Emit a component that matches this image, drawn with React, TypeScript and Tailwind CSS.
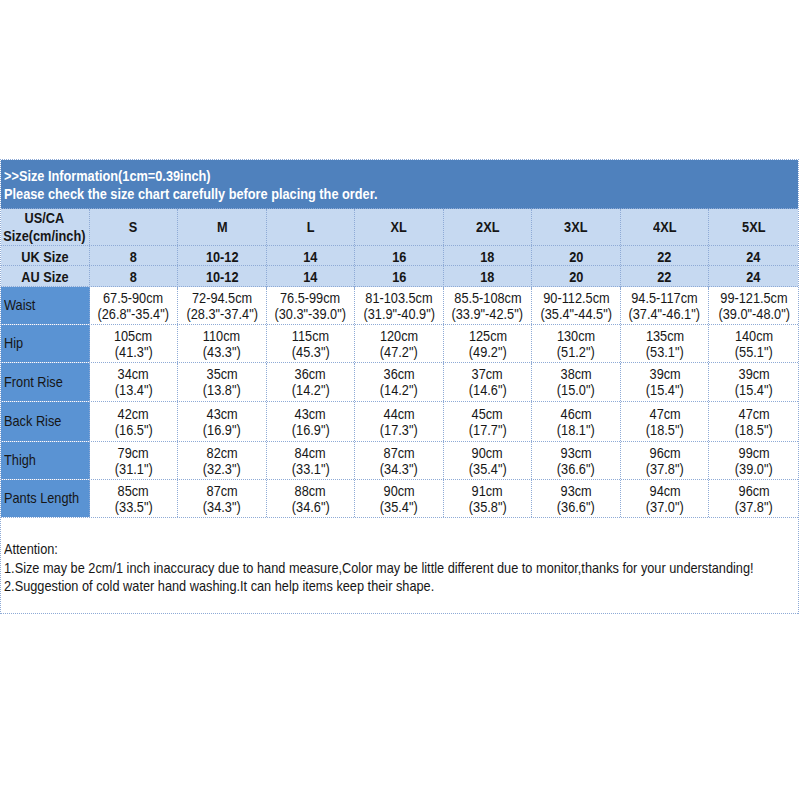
const sizes = ["S", "M", "L", "XL", "2XL", "3XL", "4XL", "5XL"];
const uk = ["8", "10-12", "14", "16", "18", "20", "22", "24"];
const au = ["8", "10-12", "14", "16", "18", "20", "22", "24"];

const rows: { label: string; h: string; cells: [string, string][] }[] = [
  {
    label: "Waist",
    h: "h-[38px]",
    cells: [
      ["67.5-90cm", '(26.8"-35.4")'],
      ["72-94.5cm", '(28.3"-37.4")'],
      ["76.5-99cm", '(30.3"-39.0")'],
      ["81-103.5cm", '(31.9"-40.9")'],
      ["85.5-108cm", '(33.9"-42.5")'],
      ["90-112.5cm", '(35.4"-44.5")'],
      ["94.5-117cm", '(37.4"-46.1")'],
      ["99-121.5cm", '(39.0"-48.0")'],
    ],
  },
  {
    label: "Hip",
    h: "h-[38px]",
    cells: [
      ["105cm", '(41.3")'],
      ["110cm", '(43.3")'],
      ["115cm", '(45.3")'],
      ["120cm", '(47.2")'],
      ["125cm", '(49.2")'],
      ["130cm", '(51.2")'],
      ["135cm", '(53.1")'],
      ["140cm", '(55.1")'],
    ],
  },
  {
    label: "Front Rise",
    h: "h-[39px]",
    cells: [
      ["34cm", '(13.4")'],
      ["35cm", '(13.8")'],
      ["36cm", '(14.2")'],
      ["36cm", '(14.2")'],
      ["37cm", '(14.6")'],
      ["38cm", '(15.0")'],
      ["39cm", '(15.4")'],
      ["39cm", '(15.4")'],
    ],
  },
  {
    label: "Back Rise",
    h: "h-[40px]",
    cells: [
      ["42cm", '(16.5")'],
      ["43cm", '(16.9")'],
      ["43cm", '(16.9")'],
      ["44cm", '(17.3")'],
      ["45cm", '(17.7")'],
      ["46cm", '(18.1")'],
      ["47cm", '(18.5")'],
      ["47cm", '(18.5")'],
    ],
  },
  {
    label: "Thigh",
    h: "h-[38px]",
    cells: [
      ["79cm", '(31.1")'],
      ["82cm", '(32.3")'],
      ["84cm", '(33.1")'],
      ["87cm", '(34.3")'],
      ["90cm", '(35.4")'],
      ["93cm", '(36.6")'],
      ["96cm", '(37.8")'],
      ["99cm", '(39.0")'],
    ],
  },
  {
    label: "Pants Length",
    h: "h-[38px]",
    cells: [
      ["85cm", '(33.5")'],
      ["87cm", '(34.3")'],
      ["88cm", '(34.6")'],
      ["90cm", '(35.4")'],
      ["91cm", '(35.8")'],
      ["93cm", '(36.6")'],
      ["94cm", '(37.0")'],
      ["96cm", '(37.8")'],
    ],
  },
];

// the picture's type is narrow, like Arial Narrow; squeeze Liberation Sans to match
const Narrow = ({ children, left, wide }: { children: React.ReactNode; left?: boolean; wide?: boolean }) => (
  <span
    className={`inline-block whitespace-nowrap ${wide ? "scale-x-[0.91]" : "scale-x-[0.85]"} ${
      left ? "origin-left" : "origin-center"
    }`}
  >
    {children}
  </span>
);

const SizeRow = ({ label, values, h }: { label: React.ReactNode; values: string[]; h: string }) => (
  <div className={`grid grid-cols-9 ${h} bg-[#c6d9f1] border-b border-dotted border-[#8eaad6]`}>
    <div className="flex flex-col items-center justify-center leading-[18px] border-r border-dotted border-[#8eaad6]">
      {label}
    </div>
    {values.map((v, i) => (
      <div
        key={i}
        className="flex items-center justify-center border-r border-dotted border-[#8eaad6] last:border-r-0"
      >
        <Narrow>{v}</Narrow>
      </div>
    ))}
  </div>
);

export default function App() {
  return (
    <div className="w-[800px] h-[800px] overflow-hidden bg-white font-['Liberation_Sans',Arial,sans-serif] text-[#161616]">
      <div className="h-[159px]" />
      <div className="w-[799px] overflow-hidden border-t border-r border-l border-dotted border-[#8eaad6]">
        <div className="h-[49px] bg-[#4f81bd] text-white font-bold text-[15px] leading-[18px] px-[3px] pt-[7px] border-b border-dotted border-[#8eaad6]">
          <p>
            <Narrow left>&gt;&gt;Size Information(1cm=0.39inch)</Narrow>
          </p>
          <p>
            <Narrow left>Please check the size chart carefully before placing the order.</Narrow>
          </p>
        </div>

        <div className="font-bold text-[15px]">
          <SizeRow
            h="h-[37px]"
            label={
              <>
                <Narrow>US/CA</Narrow>
                <Narrow>Size(cm/inch)</Narrow>
              </>
            }
            values={sizes}
          />
          <SizeRow h="h-[20px]" label={<Narrow>UK Size</Narrow>} values={uk} />
          <SizeRow h="h-[21px]" label={<Narrow>AU Size</Narrow>} values={au} />
        </div>

        <div className="text-[15px]">
          {rows.map((r) => (
            <div key={r.label} className={`grid grid-cols-9 ${r.h} border-b border-dotted border-[#8eaad6]`}>
              <div className="flex items-center pl-[3px] bg-[#5a93d3] border-r border-dotted border-[#8eaad6]">
                <Narrow left>{r.label}</Narrow>
              </div>
              {r.cells.map(([cm, inch], i) => (
                <div
                  key={i}
                  className="flex flex-col items-center justify-center text-[14px] leading-[16px] border-r border-dotted border-[#8eaad6] last:border-r-0"
                >
                  <Narrow wide>{cm}</Narrow>
                  <Narrow wide>{inch}</Narrow>
                </div>
              ))}
            </div>
          ))}
        </div>

        <div className="h-[96px] text-[15px] leading-[18.5px] px-[3px] pt-[22px] border-b border-dotted border-[#8eaad6]">
          <p>
            <Narrow left>Attention:</Narrow>
          </p>
          <p>
            <Narrow left>
              1.Size may be 2cm/1 inch inaccuracy due to hand measure,Color may be little different due to
              monitor,thanks for your understanding!
            </Narrow>
          </p>
          <p>
            <Narrow left>2.Suggestion of cold water hand washing.It can help items keep their shape.</Narrow>
          </p>
        </div>
      </div>
    </div>
  );
}
